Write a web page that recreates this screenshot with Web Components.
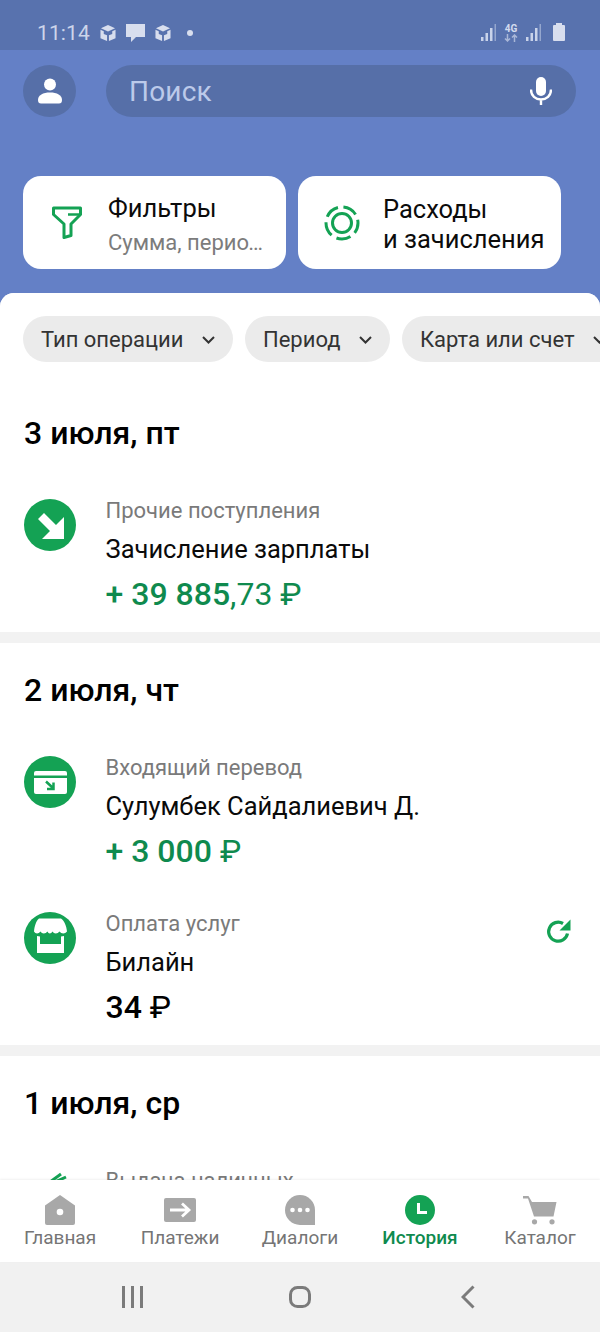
<!DOCTYPE html>
<html lang="ru">
<head>
<meta charset="utf-8">
<title>История</title>
<style>
  html, body { margin: 0; padding: 0; }
  body { width: 600px; height: 1332px; overflow: hidden; font-family: Roboto, "Noto Sans", sans-serif; }
  app-shell { --green: #14a254; --green-text: #0f8a4e; }
</style>
</head>
<body>
<app-shell>
  <status-bar slot="top"></status-bar>
  <search-header slot="top">
    <action-card>
      <svg slot="icon" width="30" height="33" viewBox="0 0 30 33" fill="none" stroke="#14a254" stroke-width="3" stroke-linejoin="round"><path d="M1.500 2H28.500V8.500L19 18V29.500L12 31.500V18L1.500 8.500Z"/><path d="M16 8.500H27" stroke-width="2.500"/></svg>
      Фильтры
      <span slot="sub">Сумма, период и тип</span>
    </action-card>
    <action-card>
      <svg slot="icon" width="36" height="36" viewBox="0 0 36 36" fill="none" stroke="#14a254"><circle cx="18" cy="18" r="9.500" stroke-width="3"/><circle cx="18" cy="18" r="16" stroke-width="3" stroke-dasharray="14.500 5.600" stroke-dashoffset="4"/></svg>
      Расходы<br>и зачисления
    </action-card>
  </search-header>

  <chip-row>
    <filter-chip>Тип операции</filter-chip>
    <filter-chip>Период</filter-chip>
    <filter-chip>Карта или счет</filter-chip>
  </chip-row>

  <day-group label="3 июля, пт">
    <operation-row category="Прочие поступления" title-text="Зачисление зарплаты" tone="income">
      <svg slot="icon" width="52" height="52" viewBox="0 0 52 52"><circle cx="26" cy="26" r="26" fill="#14a254"/><path d="M20 14L32 26L40 18V40H18L26 32L14 20Z" fill="#fff"/></svg>
      + 39 885<span class="cents">,73 ₽</span>
    </operation-row>
  </day-group>

  <day-group label="2 июля, чт">
    <operation-row category="Входящий перевод" title-text="Сулумбек Сайдалиевич Д." tone="income">
      <svg slot="icon" width="52" height="52" viewBox="0 0 52 52"><circle cx="26" cy="26" r="26" fill="#14a254"/><path d="M10 17a2 2 0 0 1 2-2H41a2 2 0 0 1 2 2V19.500H10Z" fill="#fff"/><path d="M10 22H43V36a2 2 0 0 1-2 2H12a2 2 0 0 1-2-2Z" fill="#fff"/><path d="M22 25.500L28.500 31.500M29.500 26.500V33H23" fill="none" stroke="#14a254" stroke-width="2.500"/></svg>
      + 3 000 <span class="cents">₽</span>
    </operation-row>
    <operation-row category="Оплата услуг" title-text="Билайн" tone="expense">
      <svg slot="icon" width="52" height="52" viewBox="0 0 52 52"><circle cx="26" cy="26" r="26" fill="#14a254"/><path d="M15 6.500H37C40.500 9 42.500 14 43 19.500C41 22 37.500 22 35.500 19.500C33.500 22 30 22 28.500 19.500C27 22 24.500 22 23.500 19.500C21.500 22 18 22 16.500 19.500C14.500 22 11.500 22 10 19.500C10.500 14 12 9 15 6.500Z" fill="#fff"/><path d="M13 24V41H40V24L37 24.500V32H16V24.500Z" fill="#fff"/></svg>
      34 <span class="cents">₽</span>
      <svg slot="action" width="26" height="26" viewBox="0 0 26 26" fill="none"><path d="M21.500 15.500A9.500 9.500 0 1 1 17 5.500" stroke="#14a254" stroke-width="3.200"/><path d="M13.500 12.500L24.500 1.500V12.500Z" fill="#14a254"/></svg>
    </operation-row>
  </day-group>

  <day-group label="1 июля, ср">
    <operation-row category="Выдача наличных" tone="expense">
      <svg slot="icon" width="52" height="52" viewBox="0 0 52 52" fill="none" stroke="#14a254" stroke-width="3"><path d="M26 13L37 5M31 13L42 8"/><path d="M9 12h1" stroke-width="2"/></svg>
    </operation-row>
  </day-group>

  <bottom-tab slot="tabs" label="Главная">
    <svg width="30" height="30" viewBox="0 0 30 30"><path d="M15 0L30 10.500V28a2 2 0 0 1-2 2H2a2 2 0 0 1-2-2V10.500Z" fill="#a8a8a8"/><circle cx="15" cy="17" r="3.300" fill="#fff"/></svg>
  </bottom-tab>
  <bottom-tab slot="tabs" label="Платежи">
    <svg width="32" height="24" viewBox="0 0 32 24"><rect width="32" height="24" rx="2" fill="#a8a8a8"/><path d="M6 12H25M18 5.500L25 12L18 18.500" fill="none" stroke="#fff" stroke-width="2.800"/></svg>
  </bottom-tab>
  <bottom-tab slot="tabs" label="Диалоги">
    <svg width="30" height="30" viewBox="0 0 30 30"><path d="M15 0A15 15 0 0 1 30 15V30H15A15 15 0 0 1 15 0Z" fill="#a8a8a8"/><circle cx="7.500" cy="15" r="2.300" fill="#fff"/><circle cx="15" cy="15" r="2.300" fill="#fff"/><circle cx="22.500" cy="15" r="2.300" fill="#fff"/></svg>
  </bottom-tab>
  <bottom-tab slot="tabs" label="История" active>
    <svg width="30" height="30" viewBox="0 0 30 30"><circle cx="15" cy="15" r="15" fill="#14a254"/><path d="M13.500 8V17.500H22" fill="none" stroke="#fff" stroke-width="3"/></svg>
  </bottom-tab>
  <bottom-tab slot="tabs" label="Каталог">
    <svg width="34" height="30" viewBox="0 0 34 30"><path d="M0 1H5.500L9 7H33.500L30.500 21.500H11L5 3.500H0Z" fill="#a8a8a8"/><circle cx="11.500" cy="26.800" r="2.600" fill="#a8a8a8"/><circle cx="29" cy="26.800" r="2.600" fill="#a8a8a8"/></svg>
  </bottom-tab>
</app-shell>

<script>
// Каркас экрана: верх, список с обрезкой, таббар и системная панель
class AppShell extends HTMLElement {
  constructor() {
    super();
    this.attachShadow({ mode: "open" }).innerHTML = `
      <style>
        :host { display: flex; flex-direction: column; width: 600px; height: 1332px; background: #6480c6; overflow: hidden; }
        .sheet { flex: 1; min-height: 0; overflow: hidden; background: #f2f2f2; border-radius: 14px 14px 0 0; }
        .tabs { display: grid; grid-template-columns: repeat(5, 1fr); height: 82px; background: #fff; box-shadow: 0 -1px 2px rgba(0,0,0,.06); position: relative; }
      </style>
      <slot name="top"></slot>
      <div class="sheet"><slot></slot></div>
      <div class="tabs"><slot name="tabs"></slot></div>
      <system-nav></system-nav>
    `;
  }
}

class StatusBar extends HTMLElement {
  constructor() {
    super();
    const box = `<svg width="16" height="18" viewBox="0 0 17 18" fill="#d8deee"><path d="M8.500 0.500L16 4L8.500 7.500L1 4Z"/><path d="M0.500 5.500L4 7.200V10L7.500 11.500V17.500L0.500 14.500Z"/><path d="M16.500 5.500L13 7.200V10L9.500 11.500V17.500L16.500 14.500Z"/></svg>`;
    const bars = `<svg width="15" height="17" viewBox="0 0 15 17" fill="#c9d3ea"><rect x="0" y="13" width="2.500" height="4"/><rect x="4.500" y="9" width="2.500" height="8"/><rect x="9" y="4" width="2.500" height="13"/><rect x="13.500" y="0" width="1.500" height="17" opacity=".55"/></svg>`;
    this.attachShadow({ mode: "open" }).innerHTML = `
      <style>
        :host { display: flex; align-items: center; height: 50px; padding: 15px 35px 0 37px; box-sizing: border-box; background: #5872ae; font-family: Roboto, sans-serif; }
        .time { font-size: 21px; line-height: 24px; color: #ccd5ea; letter-spacing: .1px; }
        .left { display: flex; align-items: center; gap: 10px; flex: 1; }
        .dot { width: 6px; height: 6px; border-radius: 50%; background: #d8deee; margin-left: 6px; }
        .right { display: flex; align-items: center; gap: 8px; }
        .net { display: flex; flex-direction: column; align-items: center; font-size: 10px; line-height: 10px; font-weight: 700; color: #d3dbee; width: 14px; }
        .net svg { display: block; }
        .batt { position: relative; width: 12px; height: 16px; background: #d8deee; border-radius: 1px; margin-left: 4px; }
        .batt::before { content: ""; position: absolute; top: -2px; left: 3px; width: 6px; height: 2px; background: #d8deee; }
      </style>
      <div class="left">
        <span class="time">11:14</span>
        ${box}
        <svg width="19" height="18" viewBox="0 0 19 18" fill="#d8deee"><path d="M0 0H19V13H10L5 18V13H0Z"/></svg>
        ${box}
        <span class="dot"></span>
      </div>
      <div class="right">
        ${bars}
        <span class="net">4G<svg width="14" height="8" viewBox="0 0 14 8" fill="none" stroke="#a9b7d8" stroke-width="1.500"><path d="M3.500 0V7M1 4.500L3.500 7L6 4.500M10.500 8V1M8 3.500L10.500 1L13 3.500"/></svg></span>
        ${bars}
        <span class="batt"></span>
      </div>
    `;
  }
}

// Аватар, строка поиска и две карточки-кнопки
class SearchHeader extends HTMLElement {
  constructor() {
    super();
    this.attachShadow({ mode: "open" }).innerHTML = `
      <style>
        :host { display: block; padding: 15px 24px 24px 23px; font-family: Roboto, sans-serif; }
        .top { display: flex; gap: 30px; margin-bottom: 59px; }
        .avatar { width: 53px; height: 52px; flex: none; border-radius: 50%; background: #566fa8; display: flex; align-items: center; justify-content: center; }
        .search { flex: 1; height: 52px; border-radius: 26px; background: #566fa8; display: flex; align-items: center; justify-content: space-between; padding: 0 24px 0 23px; box-sizing: border-box; }
        .search span { font-size: 28px; line-height: 32px; padding-top: 2px; color: #bccaea; letter-spacing: .2px; }
        .cards { display: grid; grid-template-columns: 263px 263px; gap: 12px; }
      </style>
      <div class="top">
        <div class="avatar"><svg width="24" height="26" viewBox="0 0 24 26" fill="#fff"><circle cx="12" cy="6.500" r="6"/><path d="M0 22c0-5 5-7.500 12-7.500S24 17 24 22c0 2.500-1 3.500-3 3.500H3c-2 0-3-1-3-3.500Z"/></svg></div>
        <div class="search"><span>Поиск</span>
          <svg width="22" height="28" viewBox="0 0 22 28" fill="none"><rect x="6" y="0" width="10" height="19" rx="5" fill="#fff"/><path d="M1 12.500C1 19 5.500 22.500 11 22.500S21 19 21 12.500M11 22V28" stroke="#fff" stroke-width="2.400"/></svg>
        </div>
      </div>
      <div class="cards"><slot></slot></div>
    `;
  }
}

class ActionCard extends HTMLElement {
  constructor() {
    super();
    this.attachShadow({ mode: "open" }).innerHTML = `
      <style>
        :host { display: flex; align-items: center; height: 93px; background: #fff; border-radius: 18px; box-sizing: border-box; min-width: 0; }
        .icon { width: 85px; box-sizing: border-box; padding-left: 3px; flex: none; display: flex; justify-content: center; }
        .text { min-width: 0; flex: 1; padding: 2px 15px 0 0; font-size: 25.500px; line-height: 30px; color: #0b0b0b; }
        .sub { display: block; font-size: 22px; line-height: 30px; margin: 5px 4px -4px 0; color: #7c7c7c; white-space: nowrap; overflow: hidden; text-overflow: ellipsis; }
      </style>
      <div class="icon"><slot name="icon"></slot></div>
      <div class="text"><slot></slot><span class="sub" id="sub"><slot name="sub"></slot></span></div>
    `;
  }
  connectedCallback() {
    if (!this.querySelector('[slot="sub"]')) this.shadowRoot.getElementById("sub").style.display = "none";
  }
}

class ChipRow extends HTMLElement {
  constructor() {
    super();
    this.attachShadow({ mode: "open" }).innerHTML = `
      <style>
        :host { display: flex; gap: 12px; padding: 23px 0 24px 23px; background: #fff; overflow: hidden; white-space: nowrap; }
      </style>
      <slot></slot>
    `;
  }
}

class FilterChip extends HTMLElement {
  constructor() {
    super();
    this.attachShadow({ mode: "open" }).innerHTML = `
      <style>
        :host { display: inline-flex; flex: none; align-items: center; gap: 18.500px; height: 46px; padding: 0 18px; border-radius: 23px; background: #ebebeb; font-family: Roboto, sans-serif; font-size: 22px; color: #333; }
        svg { margin-top: 1px; }
      </style>
      <span><slot></slot></span>
      <svg width="13" height="8" viewBox="0 0 13 8" fill="none" stroke="#333" stroke-width="2"><path d="M1 1L6.500 6.500L12 1"/></svg>
    `;
  }
}

class DayGroup extends HTMLElement {
  constructor() {
    super();
    this.attachShadow({ mode: "open" }).innerHTML = `
      <style>
        :host { display: block; background: #fff; padding: 28px 28px 0 24px; margin-bottom: 11px; font-family: Roboto, sans-serif; }
        h2 { margin: 0 0 44px; font-size: 32px; line-height: 38px; font-weight: 500; color: #000; }
        .rows { display: flex; flex-direction: column; gap: 37.500px; padding-bottom: 18px; }
      </style>
      <h2></h2>
      <div class="rows"><slot></slot></div>
    `;
    this.shadowRoot.querySelector("h2").textContent = this.getAttribute("label");
  }
}

class OperationRow extends HTMLElement {
  constructor() {
    super();
    this.attachShadow({ mode: "open" }).innerHTML = `
      <style>
        :host { display: flex; font-family: Roboto, sans-serif; }
        .icon { width: 81.500px; flex: none; padding-top: 3px; box-sizing: border-box; height: 55px; }
        .body { flex: 1; min-width: 0; }
        .cat { font-size: 22px; line-height: 30px; color: #7a7a7a; }
        .title { font-size: 25.500px; line-height: 30px; margin-top: 8px; color: #0a0a0a; }
        .sum { font-size: 32px; line-height: 40px; margin-top: 10px; font-weight: 500; color: #000; }
        :host([tone="income"]) .sum { color: var(--green-text); }
        ::slotted(.cents) { font-weight: 400; }
        .action { padding-top: 9px; }
      </style>
      <div class="icon"><slot name="icon"></slot></div>
      <div class="body">
        <div class="cat"></div>
        <div class="title"></div>
        <div class="sum"><slot></slot></div>
      </div>
      <div class="action"><slot name="action"></slot></div>
    `;
    this.shadowRoot.querySelector(".cat").textContent = this.getAttribute("category");
    this.shadowRoot.querySelector(".title").textContent = this.getAttribute("title-text");
  }
}

class BottomTab extends HTMLElement {
  constructor() {
    super();
    this.attachShadow({ mode: "open" }).innerHTML = `
      <style>
        :host { display: flex; flex-direction: column; align-items: center; font-family: Roboto, sans-serif; font-size: 19px; color: #757575; }
        :host([active]) { color: var(--green-text); font-weight: 500; }
        .icon { height: 30px; margin-top: 15px; display: flex; align-items: center; justify-content: center; }
        .label { margin-top: 0; line-height: 26px; }
      </style>
      <div class="icon"><slot></slot></div>
      <div class="label"></div>
    `;
    this.shadowRoot.querySelector(".label").textContent = this.getAttribute("label");
  }
}

class SystemNav extends HTMLElement {
  constructor() {
    super();
    this.attachShadow({ mode: "open" }).innerHTML = `
      <style>
        :host { display: grid; grid-template-columns: 1fr 1fr 1fr; align-items: center; justify-items: center; height: 70px; padding: 0 48px; box-sizing: border-box; background: #f1f1f1; }
      </style>
      <svg width="21" height="22" viewBox="0 0 21 22" fill="#7b7b7b"><rect x="0" y="0" width="3" height="22"/><rect x="9" y="0" width="3" height="22"/><rect x="18" y="0" width="3" height="22"/></svg>
      <svg width="22" height="22" viewBox="0 0 22 22" fill="none" stroke="#7b7b7b" stroke-width="3"><rect x="1.500" y="1.500" width="19" height="19" rx="7"/></svg>
      <svg width="14" height="24" viewBox="0 0 14 24" fill="none" stroke="#7b7b7b" stroke-width="3"><path d="M12.500 1.500L2 12L12.500 22.500"/></svg>
    `;
  }
}

customElements.define("app-shell", AppShell);
customElements.define("status-bar", StatusBar);
customElements.define("search-header", SearchHeader);
customElements.define("action-card", ActionCard);
customElements.define("chip-row", ChipRow);
customElements.define("filter-chip", FilterChip);
customElements.define("day-group", DayGroup);
customElements.define("operation-row", OperationRow);
customElements.define("bottom-tab", BottomTab);
customElements.define("system-nav", SystemNav);
</script>
</body>
</html>
